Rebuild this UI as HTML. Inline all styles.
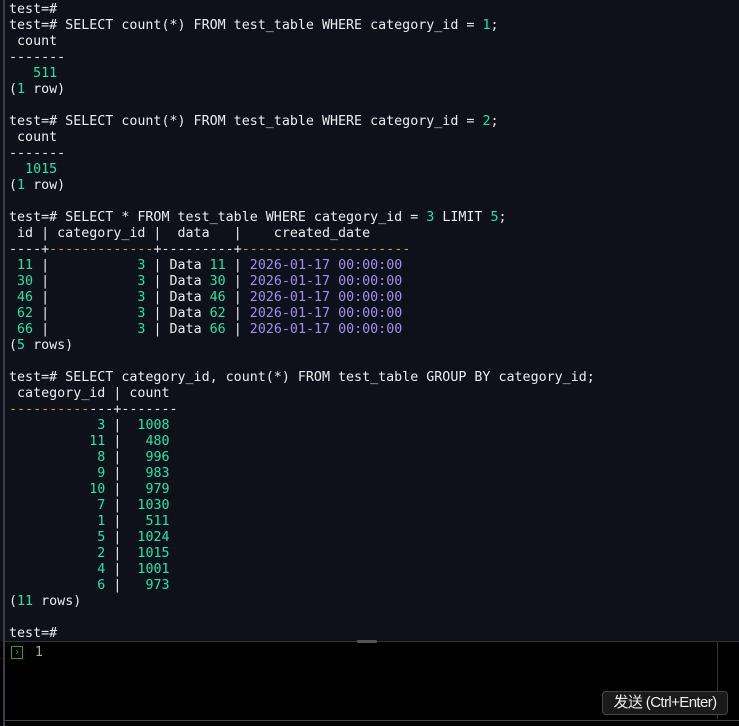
<!DOCTYPE html>
<html><head><style>
body{margin:0;width:739px;height:726px;background:#000;overflow:hidden;font-family:"DejaVu Sans Mono","Liberation Mono",monospace;}
#term{position:absolute;left:0;top:0;width:739px;height:641px;background:#0e111a;}
#bl{position:absolute;left:3px;top:0;width:2px;height:726px;background:#3a3d45;}
pre{position:absolute;left:9px;top:2px;margin:0;font-size:13.33px;line-height:16px;color:#ececec;font-family:inherit;}
.g{color:#1ee8a4}.p{color:#a48cf0}.o{color:#d99a30}
#inp{position:absolute;left:5px;top:641px;width:734px;height:78px;background:#000;border-top:1px solid #333;border-bottom:1px solid #444;}
#vr{position:absolute;left:717px;top:642px;width:1px;height:77px;background:#333;}
#grip{position:absolute;left:357px;top:640px;width:20px;height:3px;background:#555;border-radius:1px;}
#chev{position:absolute;left:11px;top:646px;width:12px;height:13px;border:1px solid #1e9e5a;box-sizing:border-box;color:#1e9e5a;font-size:10px;line-height:11px;text-align:center;}
#one{position:absolute;left:35px;top:645px;color:#aaa;font-size:13px;line-height:16px;}
#btn{position:absolute;left:602px;top:691px;width:126px;height:24px;background:#1a1a1a;border:1px solid #444;border-radius:4px;box-sizing:border-box;color:#eee;font:15px "Liberation Sans Narrow","Liberation Sans","Noto Sans CJK SC",sans-serif;line-height:22px;text-align:center;letter-spacing:-0.6px;}
</style></head><body>
<div id="term"></div>
<pre>test=#
test=# SELECT count(*) FROM test_table WHERE category_id = <span class="g">1</span>;
 count
-------
   <span class="g">511</span>
(<span class="g">1</span> row)

test=# SELECT count(*) FROM test_table WHERE category_id = <span class="g">2</span>;
 count
-------
  <span class="g">1015</span>
(<span class="g">1</span> row)

test=# SELECT * FROM test_table WHERE category_id = <span class="g">3</span> LIMIT <span class="g">5</span>;
 id | category_id |  data   |    created_date
----+<span class="o">-------------</span>+---------+<span class="o">---------------------</span>
 <span class="g">11</span> |           <span class="g">3</span> | Data <span class="g">11</span> | <span class="p">2026-01-17 00:00:00</span>
 <span class="g">30</span> |           <span class="g">3</span> | Data <span class="g">30</span> | <span class="p">2026-01-17 00:00:00</span>
 <span class="g">46</span> |           <span class="g">3</span> | Data <span class="g">46</span> | <span class="p">2026-01-17 00:00:00</span>
 <span class="g">62</span> |           <span class="g">3</span> | Data <span class="g">62</span> | <span class="p">2026-01-17 00:00:00</span>
 <span class="g">66</span> |           <span class="g">3</span> | Data <span class="g">66</span> | <span class="p">2026-01-17 00:00:00</span>
(<span class="g">5</span> rows)

test=# SELECT category_id, count(*) FROM test_table GROUP BY category_id;
 category_id | count
<span class="o">----------</span>---+-------
           <span class="g">3</span> |  <span class="g">1008</span>
          <span class="g">11</span> |   <span class="g">480</span>
           <span class="g">8</span> |   <span class="g">996</span>
           <span class="g">9</span> |   <span class="g">983</span>
          <span class="g">10</span> |   <span class="g">979</span>
           <span class="g">7</span> |  <span class="g">1030</span>
           <span class="g">1</span> |   <span class="g">511</span>
           <span class="g">5</span> |  <span class="g">1024</span>
           <span class="g">2</span> |  <span class="g">1015</span>
           <span class="g">4</span> |  <span class="g">1001</span>
           <span class="g">6</span> |   <span class="g">973</span>
(<span class="g">11</span> rows)

test=#</pre>
<div id="inp"></div>
<div id="vr"></div>
<div id="grip"></div>
<div id="bl"></div>
<div id="chev">›</div>
<div id="one">1</div>
<div id="btn">发送 (Ctrl+Enter)</div>
</body></html>
